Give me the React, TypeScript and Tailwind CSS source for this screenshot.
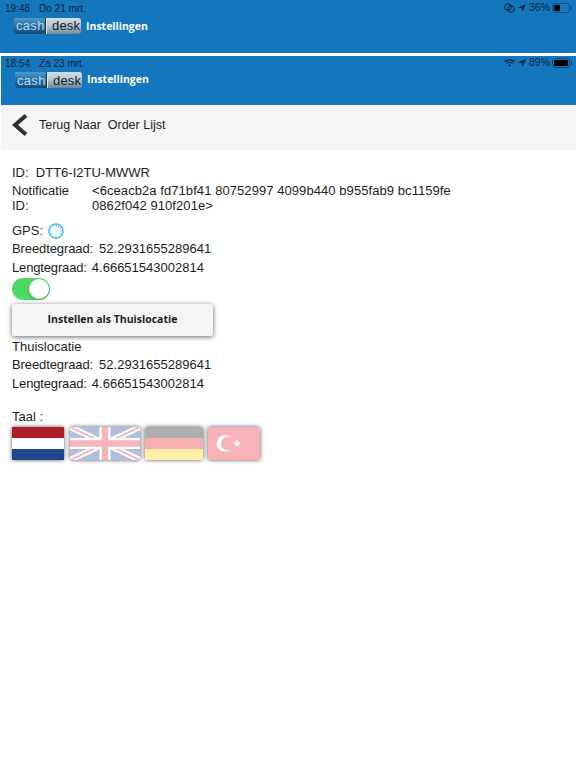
const BLUE = "bg-[#1477bd]"

function Battery({ level, pct }: { level: string; pct: string }) {
  return (
    <span className="flex items-center gap-[1px]">
      <span className="mr-[1px] text-[10.5px]">{pct}</span>
      <span className="flex h-[10px] w-[18px] items-center rounded-[3px] border border-[#0c4a78] p-[1px]">
        <span className={`h-full rounded-[1px] bg-black ${level}`} />
      </span>
      <span className="h-[4px] w-[1px] bg-[#0c4a78]" />
    </span>
  )
}

function LocationArrow() {
  return (
    <svg width="8" height="8" viewBox="0 0 10 10" className="fill-[#0a2540]">
      <path d="M10 0 0 4.4l4.6.9L5.6 10z" />
    </svg>
  )
}

function Logo() {
  return (
    <div className="flex h-[16px] w-[67px] items-center overflow-hidden rounded-[3px] bg-gradient-to-b from-[#d3dde3] via-[#b4c4ce] to-[#6f8796] text-[13px] leading-none font-['Liberation_Sans',sans-serif]">
      <span className="flex h-full w-[31px] items-center bg-gradient-to-b from-[#4c98ce] to-[#0c4a78] pl-[2px] tracking-[0.3px] text-[#b4daf0]">
        cash
      </span>
      <span className="h-full w-[1px] bg-[#0c3350]" />
      <span className="h-full w-[1px] bg-[#e6ecf0]" />
      <span className="pl-[5px] tracking-[0.2px] text-[#12212c]">desk</span>
    </div>
  )
}

function Header({ title, titleClass }: { title: string; titleClass?: string }) {
  return (
    <div className="ml-[14px] flex items-center gap-[5px]">
      <Logo />
      <span className={`text-[10.5px] font-bold text-white font-['Open_Sans',sans-serif] ${titleClass ?? ""}`}>{title}</span>
    </div>
  )
}

function GpsSpinner() {
  return (
    <svg width="16" height="16" viewBox="0 0 16 16" fill="none">
      <circle cx="8" cy="8" r="7" fill="#f2fbfe" stroke="#45c0ef" strokeWidth="1.6" />
      <path d="M8 3a5 5 0 0 1 5 5" stroke="#7fa9bd" strokeWidth="1.2" strokeDasharray="1 1.2" />
      <path d="M3 8a5 5 0 0 1 5-5" stroke="#b9e6f7" strokeWidth="1.2" strokeDasharray="1 1.2" />
    </svg>
  )
}

function FlagFrame({ width, children, square }: { width: string; children: React.ReactNode; square?: boolean }) {
  return (
    <div className={`h-[33px] overflow-hidden shadow-[0_0_4px_rgba(0,0,0,0.65)] ${square ? "" : "rounded-[2px]"} ${width}`}>
      {children}
    </div>
  )
}

function Stripes({ colors }: { colors: string[] }) {
  return (
    <div className="flex h-full flex-col">
      {colors.map((c) => (
        <div key={c} className={`flex-1 ${c}`} />
      ))}
    </div>
  )
}

function UkFlag() {
  return (
    <svg width="70" height="33" viewBox="0 0 70 33" className="block">
      <rect width="70" height="33" fill="#b0bfdc" />
      <path d="M0 0 70 33M70 0 0 33" stroke="#fff" strokeWidth="6" />
      <path d="M0 0 70 33M70 0 0 33" stroke="#f5b4ba" strokeWidth="2" />
      <path d="M35 0V33M0 16.5H70" stroke="#fff" strokeWidth="11" />
      <path d="M35 0V33M0 16.5H70" stroke="#f5b4ba" strokeWidth="6.5" />
    </svg>
  )
}

function TurkeyFlag() {
  return (
    <svg width="52" height="33" viewBox="0 0 52 33" className="block">
      <rect width="52" height="33" fill="#f7b2b8" />
      <circle cx="17" cy="16.5" r="8.3" fill="#fff" />
      <circle cx="19.5" cy="16.5" r="6.6" fill="#f7b2b8" />
      <path d="m29 12 1 3 3.2 0-2.6 1.9 1 3-2.6-1.9-2.6 1.9 1-3-2.6-1.9 3.2 0z" fill="#fff" />
    </svg>
  )
}

function CoordRows() {
  return (
    <>
      <p className="h-[18.5px] leading-[18px]">
        <span className="tracking-[-0.1px]">Breedtegraad:</span>
        <span className="ml-[6px]">52.2931655289641</span>
      </p>
      <p className="h-[18.5px] leading-[18px]">
        <span className="tracking-[-0.15px]">Lengtegraad:</span>
        <span className="ml-[5px]">4.66651543002814</span>
      </p>
    </>
  )
}

export default function App() {
  return (
    <div className="h-[768px] w-[576px] overflow-hidden bg-white font-['Liberation_Sans',sans-serif] text-[13px] text-[#1c1c1c]">
      {/* achterliggend scherm */}
      <div className={`h-[53px] ${BLUE} pt-[1px]`}>
        <div className="flex h-[14px] items-center justify-between pl-[5px] pr-[4px] text-[10px] text-[#0a2540]">
          <span>
            19:48<span className="ml-[9px]">Do 21 mrt.</span>
          </span>
          <span className="flex items-center gap-[3px]">
            <svg width="11" height="10" viewBox="0 0 11 10" fill="none" stroke="#0a2540" strokeWidth="1">
              <circle cx="4" cy="4" r="3.2" />
              <circle cx="7" cy="6" r="3.2" />
            </svg>
            <LocationArrow />
            <Battery pct="36%" level="w-[6px]" />
          </span>
        </div>
        <div className="mt-[2px]">
          <Header title="Instellingen" titleClass="pt-[2px]" />
        </div>
      </div>

      <div className="h-[3px]" />

      {/* voorste scherm */}
      <div className={`ml-[1px] h-[49px] ${BLUE} pt-[1px]`}>
        <div className="flex h-[12px] items-center justify-between pl-[4px] pr-[4px] text-[10px] text-[#0a2540]">
          <span>
            18:54<span className="ml-[9px]">Za 23 mrt.</span>
          </span>
          <span className="flex items-center gap-[3px]">
            <svg width="11" height="8" viewBox="0 0 11 8" fill="none" stroke="#0b2238" strokeWidth="1.3">
              <path d="M.6 2.8a7 7 0 0 1 9.8 0M2.3 4.6a4.6 4.6 0 0 1 6.4 0" />
              <path d="M5.5 7.8 3.9 6.2a2.3 2.3 0 0 1 3.2 0z" fill="#0b2238" stroke="none" />
            </svg>
            <LocationArrow />
            <Battery pct="89%" level="w-[14px]" />
          </span>
        </div>
        <div className="mt-[3px]">
          <Header title="Instellingen" />
        </div>
      </div>

      <div className="ml-[1px] flex h-[45px] items-center bg-[#f5f5f5] pb-[5px] pl-[11px]">
        <svg width="16" height="22" viewBox="0 0 16 22" fill="none" stroke="#2f2f2f" strokeWidth="4">
          <path d="M14 1.5 3 11l11 9.5" />
        </svg>
        <span className="ml-[11px] text-[12.5px]">Terug Naar&nbsp; Order Lijst</span>
      </div>

      <div className="pl-[12px] pt-[15px]">
        <p className="h-[16px] leading-[16px]">ID:&nbsp; DTT6-I2TU-MWWR</p>

        <div className="mt-[2px] flex leading-[15px]">
          <p className="mr-[20px] w-[60px]">Notificatie ID:</p>
          <p className="w-[370px] tracking-[0.07px]">&lt;6ceacb2a fd71bf41 80752997 4099b440 b955fab9 bc1159fe 0862f042 910f201e&gt;</p>
        </div>

        <div className="mt-[9px] flex h-[18px] items-center gap-[5px]">
          <span>GPS:</span>
          <GpsSpinner />
        </div>
        <CoordRows />

        <div className="mt-[1px] flex h-[22px] w-[38px] items-center justify-end rounded-full bg-[#4cd964] pr-[1px]">
          <span className="h-[20px] w-[20px] rounded-full bg-white shadow-[0_1px_2px_rgba(0,0,0,0.3)]" />
        </div>

        <button className="mt-[4px] block h-[32px] w-[201px] rounded-[2px] bg-[#f5f5f5] text-[10.5px] font-bold text-[#1c1c1c] shadow-[0_1px_5px_rgba(0,0,0,0.6)] font-['Open_Sans',sans-serif]">
          Instellen als Thuislocatie
        </button>

        <p className="mt-[2px] h-[18px] leading-[18px]">Thuislocatie</p>
        <CoordRows />

        <p className="mt-[16px] h-[16px] leading-[16px]">Taal :</p>
        <div className="mt-[2px] flex">
          <FlagFrame width="w-[52px]" square>
            <Stripes colors={["bg-[#ae1c28]", "bg-white", "bg-[#21468b]"]} />
          </FlagFrame>
          <div className="ml-[6px]">
            <FlagFrame width="w-[70px]">
              <UkFlag />
            </FlagFrame>
          </div>
          <div className="ml-[5px]">
            <FlagFrame width="w-[58px]">
              <Stripes colors={["bg-[#adadad]", "bg-[#f7b0b0]", "bg-[#ffeeaa]"]} />
            </FlagFrame>
          </div>
          <div className="ml-[5px]">
            <FlagFrame width="w-[52px]">
              <TurkeyFlag />
            </FlagFrame>
          </div>
        </div>
      </div>
    </div>
  )
}
